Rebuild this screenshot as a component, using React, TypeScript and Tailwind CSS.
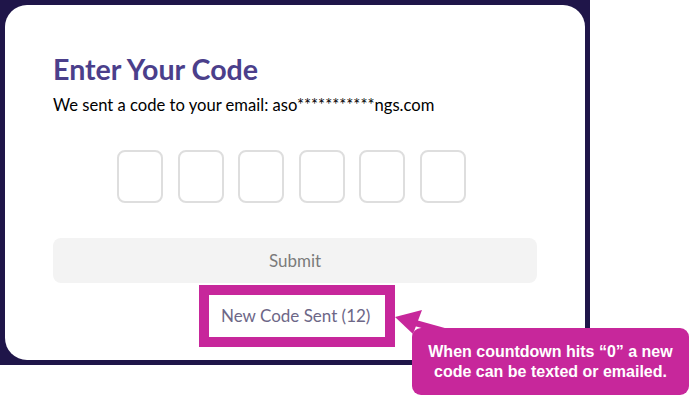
import React from "react";

export default function App() {
  const boxes = [0, 1, 2, 3, 4, 5];
  return (
    <div className="relative w-[694px] h-[403px] bg-white overflow-hidden" style={{ fontFamily: "Lato, 'Noto Sans', sans-serif" }}>
      <div className="w-[590px] h-[365px] bg-[#1f1549] p-[5px]">
        <div className="w-full h-full bg-white rounded-[22px] pt-[47px] pl-[48px] flex flex-col">
          <h1 className="text-[28.6px] leading-[34px] font-bold text-[#4b3f8b]">Enter Your Code</h1>
          <p className="mt-[9px] text-[16.6px] leading-[20px] text-black">
            We sent a code to your email: aso***********ngs.com
          </p>
          <div className="mt-[35px] ml-[64px] flex gap-[14.5px]">
            {boxes.map((b) => (
              <div key={b} className="w-[46px] h-[53px] rounded-[8px] border-2 border-[#dedede] bg-white" />
            ))}
          </div>
          <div className="mt-[35px] w-[484px] h-[45px] rounded-[8px] bg-[#f3f3f3] flex items-center justify-center text-[17px] text-[#7b7b7b]">
            Submit
          </div>
          <div className="mt-[2px] ml-[146px] w-[196px] h-[62px] border-[10px] border-[#c7279b] bg-white flex items-center pl-[12px] text-[17px] text-[#6d6787]">
            New Code Sent (12)
          </div>
        </div>
      </div>
      <svg className="absolute left-0 top-0" width="694" height="403" viewBox="0 0 694 403">
        <line x1="408" y1="321" x2="462" y2="336" stroke="#c7279b" strokeWidth="6" />
        <polygon points="395,317 422,310 413,334" fill="#c7279b" />
      </svg>
      <div
        className="absolute left-[412px] top-[328px] w-[277px] h-[67px] rounded-[9px] bg-[#c7279b] flex items-center justify-center text-center text-white font-bold text-[16px] leading-[20px]"
        style={{ fontFamily: "'Liberation Sans', Arial, sans-serif" }}
      >
        When countdown hits “0” a new
        <br />
        code can be texted or emailed.
      </div>
    </div>
  );
}
